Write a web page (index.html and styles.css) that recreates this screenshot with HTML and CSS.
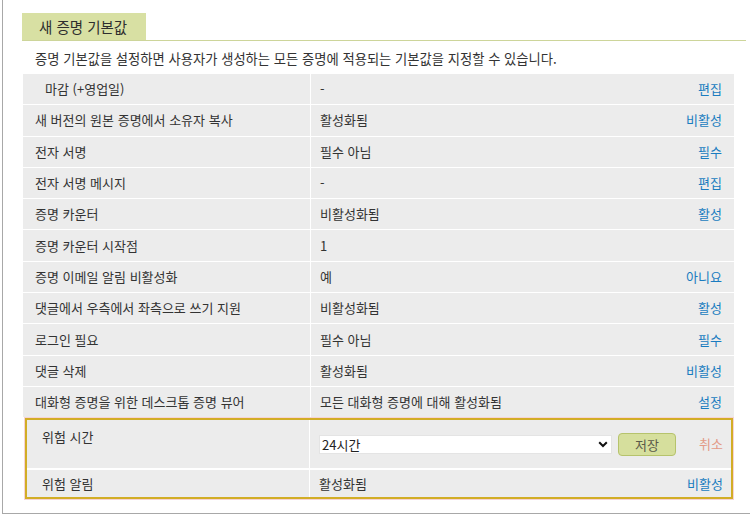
FILE: index.html
```html
<!DOCTYPE html>
<html lang="ko">
<head>
<meta charset="utf-8">
<link rel="stylesheet" href="styles.css">
</head>
<body>
<div class="frame">
  <div class="tabbar"><div class="tab">새 증명 기본값</div></div>
  <p class="desc">증명 기본값을 설정하면 사용자가 생성하는 모든 증명에 적용되는 기본값을 지정할 수 있습니다.</p>
  <div class="table">
    <div class="row"><div class="label first">마감 (+영업일)</div><div class="value"><span>-</span><a class="act">편집</a></div></div>
    <div class="row"><div class="label">새 버전의 원본 증명에서 소유자 복사</div><div class="value"><span>활성화됨</span><a class="act">비활성</a></div></div>
    <div class="row"><div class="label">전자 서명</div><div class="value"><span>필수 아님</span><a class="act">필수</a></div></div>
    <div class="row"><div class="label">전자 서명 메시지</div><div class="value"><span>-</span><a class="act">편집</a></div></div>
    <div class="row"><div class="label">증명 카운터</div><div class="value"><span>비활성화됨</span><a class="act">활성</a></div></div>
    <div class="row"><div class="label">증명 카운터 시작점</div><div class="value"><span>1</span></div></div>
    <div class="row"><div class="label">증명 이메일 알림 비활성화</div><div class="value"><span>예</span><a class="act">아니요</a></div></div>
    <div class="row"><div class="label">댓글에서 우측에서 좌측으로 쓰기 지원</div><div class="value"><span>비활성화됨</span><a class="act">활성</a></div></div>
    <div class="row"><div class="label">로그인 필요</div><div class="value"><span>필수 아님</span><a class="act">필수</a></div></div>
    <div class="row"><div class="label">댓글 삭제</div><div class="value"><span>활성화됨</span><a class="act">비활성</a></div></div>
    <div class="row"><div class="label">대화형 증명을 위한 데스크톱 증명 뷰어</div><div class="value"><span>모든 대화형 증명에 대해 활성화됨</span><a class="act">설정</a></div></div>
    <div class="highlight">
      <div class="hrow tall">
        <div class="hlabel top">위험 시간</div>
        <div class="hvalue edit">
          <span class="selwrap">
            <select class="sel"><option>24시간</option></select>
            <svg class="chev" width="10" height="7" viewBox="0 0 10 7"><path d="M1.2 1.2 L5 5 L8.8 1.2" fill="none" stroke="#111" stroke-width="2"/></svg>
          </span>
          <button class="save" type="button">저장</button>
          <a class="cancel">취소</a>
        </div>
      </div>
      <div class="hrow">
        <div class="hlabel">위험 알림</div>
        <div class="hvalue"><span>활성화됨</span><a class="act">비활성</a></div>
      </div>
    </div>
  </div>
</div>
</body>
</html>
```
FILE: styles.css
```css
html, body {
  margin: 0;
  padding: 0;
  background: #ffffff;
}
body {
  font-family: "Noto Sans CJK KR", "Noto Sans", sans-serif;
  color: #333333;
  font-size: 13px;
}
.frame {
  margin-left: 2px;
  width: 725px;
  height: 500px;
  border: 1px solid #a8a8a8;
  border-top: none;
  padding: 13px 14px 0 19px;
}
.tabbar {
  border-bottom: 1px solid #cdd59a;
  height: 27px;
  margin-right: 1px;
}
.tab {
  width: 124px;
  height: 27px;
  background: #d8e0a3;
  font-size: 14.5px;
  line-height: 27px;
  padding-left: 17px;
  box-sizing: border-box;
  color: #2e2e2e;
}
.desc {
  margin: 8px 0 0 0;
  padding-left: 13px;
  font-size: 13.3px;
  line-height: 20px;
  height: 20px;
}
.table {
  margin-top: 5px;
  margin-left: 1px;
  width: 711px;
}
.row {
  display: grid;
  grid-template-columns: 287px 1fr;
  column-gap: 1px;
  height: 30.3px;
  margin-bottom: 1px;
}
.label, .value {
  background: #ececec;
  display: flex;
  align-items: center;
  line-height: 18px;
}
.label {
  padding-left: 12px;
}
.label.first {
  padding-left: 22px;
}
.value {
  padding-left: 9px;
  padding-right: 12px;
  justify-content: space-between;
}
.act {
  color: #1a7cc0;
  cursor: pointer;
}
.highlight {
  margin: 0 1px 0 2px;
  border: 2px solid #d2ad26;
  box-shadow: 0 0 0 1px #f6d4d4;
  background: #ffffff;
}
.hrow {
  display: grid;
  grid-template-columns: 282px 1fr;
  column-gap: 1px;
  height: 27px;
}
.hrow.tall {
  height: 48px;
  margin-bottom: 2px;
}
.hlabel, .hvalue {
  background: #ececec;
  display: flex;
  align-items: center;
  line-height: 18px;
}
.hlabel {
  padding-left: 15px;
}
.hlabel.top {
  align-items: flex-start;
  padding-top: 8px;
}
.hvalue {
  padding-left: 9px;
  padding-right: 8px;
  justify-content: space-between;
}
.hvalue.edit {
  justify-content: flex-start;
}
.selwrap {
  position: relative;
  display: block;
  width: 293px;
  height: 19px;
}
.sel {
  -webkit-appearance: none;
  appearance: none;
  display: block;
  width: 293px;
  height: 19px;
  box-sizing: border-box;
  font-family: "Noto Sans CJK KR", "Noto Sans", sans-serif;
  font-size: 13px;
  line-height: 17px;
  color: #222;
  background: #ffffff;
  border: 1px solid #e4e4e4;
  border-radius: 0;
  padding: 0 0 0 2px;
  margin: 0;
  outline: none;
}
.chev {
  position: absolute;
  right: 4px;
  top: 6px;
  pointer-events: none;
}
.save {
  margin-left: 6px;
  width: 58px;
  height: 23px;
  background: #d6df9d;
  border: 1px solid #b6c36c;
  border-radius: 4px;
  font-family: "Noto Sans CJK KR", "Noto Sans", sans-serif;
  font-size: 13px;
  color: #5a5a4a;
  padding: 0;
}
.cancel {
  margin-left: auto;
  color: #e39a86;
  cursor: pointer;
}
```
